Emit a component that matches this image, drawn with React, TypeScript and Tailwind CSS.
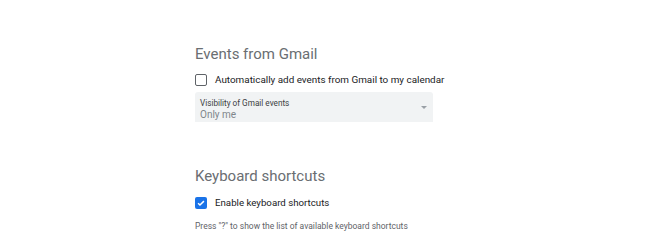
export default function App() {
  return (
    <div className="w-[650px] h-[248px] bg-white font-['Roboto',sans-serif] overflow-hidden">
      <div className="pl-[195px] pt-[45px] flex flex-col">
        <h2 className="text-[15px] leading-[18px] text-[#6a6e72]">Events from Gmail</h2>
        <label className="mt-[8px] flex items-center gap-[8px] h-[18px]">
          <span className="w-[12px] h-[12px] rounded-[2px] border-[1.5px] border-[#5f6368]" />
          <span className="text-[9.9px] text-[#202124]">
            Automatically add events from Gmail to my calendar
          </span>
        </label>
        <div className="mt-[3px] w-[238px] h-[30px] bg-[#f1f3f4] rounded-t-[3px] flex items-start justify-between pt-[6px] pl-[5px] pr-[6px]">
          <div className="flex flex-col">
            <span className="text-[8.2px] leading-[11px] text-[#3c4043]">Visibility of Gmail events</span>
            <span className="text-[10px] leading-[11px] text-[#80868b]">Only me</span>
          </div>
          <span className="mt-[8px] w-0 h-0 border-l-[3px] border-r-[3px] border-t-[3px] border-l-transparent border-r-transparent border-t-[#9aa0a6]" />
        </div>

        <h2 className="mt-[45px] text-[15px] leading-[18px] text-[#6a6e72]">Keyboard shortcuts</h2>
        <label className="mt-[10px] flex items-center gap-[8px] h-[16px]">
          <span className="w-[12px] h-[12px] rounded-[2px] bg-[#1a73e8] flex items-center justify-center">
            <svg viewBox="0 0 24 24" className="w-[10px] h-[10px]" fill="none" stroke="white" strokeWidth="3.5">
              <path d="M5 12.5l4.5 4.5L19 7.5" />
            </svg>
          </span>
          <span className="text-[9.7px] text-[#202124]">Enable keyboard shortcuts</span>
        </label>
        <p className="mt-[10px] text-[8.5px] leading-[11px] text-[#5f6368]">
          Press "?" to show the list of available keyboard shortcuts
        </p>
      </div>
    </div>
  );
}
